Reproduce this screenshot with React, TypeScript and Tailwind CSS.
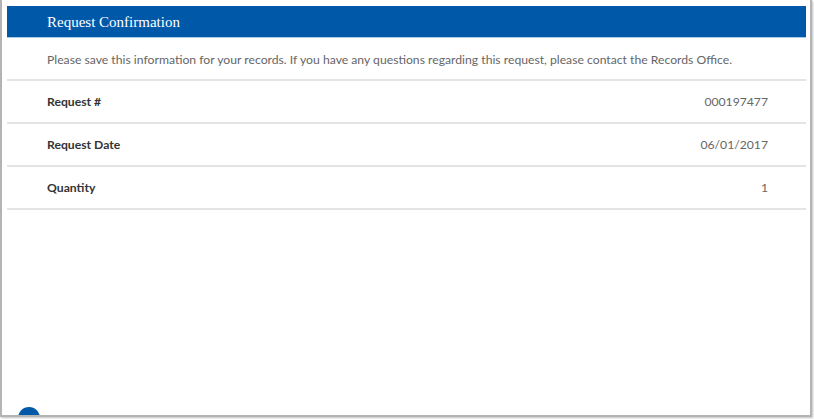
import React from "react";

const rows = [
  { label: "Request #", value: "000197477" },
  { label: "Request Date", value: "06/01/2017" },
  { label: "Quantity", value: "1" },
];

export default function App() {
  return (
    <div className="w-[814px] h-[419px] bg-white" style={{ fontFamily: "Lato, 'Open Sans', sans-serif" }}>
      <div className="relative w-[812px] h-[417px] border-l-2 border-r-2 border-b-2 border-[#b4b4b4] shadow-[1px_1px_2px_rgba(0,0,0,0.25)] overflow-hidden pt-[6px] pl-[5px] pr-[4px]">
        <div className="h-[32px] bg-[#0059a8] border-b border-[#a9cbea] flex items-center pl-[40px] pt-[1px]">
          <h1 className="text-white text-[15px] leading-none" style={{ fontFamily: "'Liberation Serif', serif" }}>
            Request Confirmation
          </h1>
        </div>
        <p className="h-[43px] flex items-center pl-[40px] pt-[3px] text-[12.2px] text-[#666666] border-b-2 border-[#e4e4e4]">
          Please save this information for your records. If you have any questions regarding this request, please contact the Records Office.
        </p>
        {rows.map((r) => (
          <div key={r.label} className="h-[43px] flex items-center justify-between pl-[40px] pr-[38px] pt-[2px] border-b-2 border-[#e4e4e4] text-[12.2px]">
            <span className="font-bold text-[#333333]">{r.label}</span>
            <span className="text-[#666666]">{r.value}</span>
          </div>
        ))}
        <div className="absolute left-[16px] top-[407px] w-[22px] h-[22px] rounded-full bg-[#0059a8]" />
      </div>
    </div>
  );
}
